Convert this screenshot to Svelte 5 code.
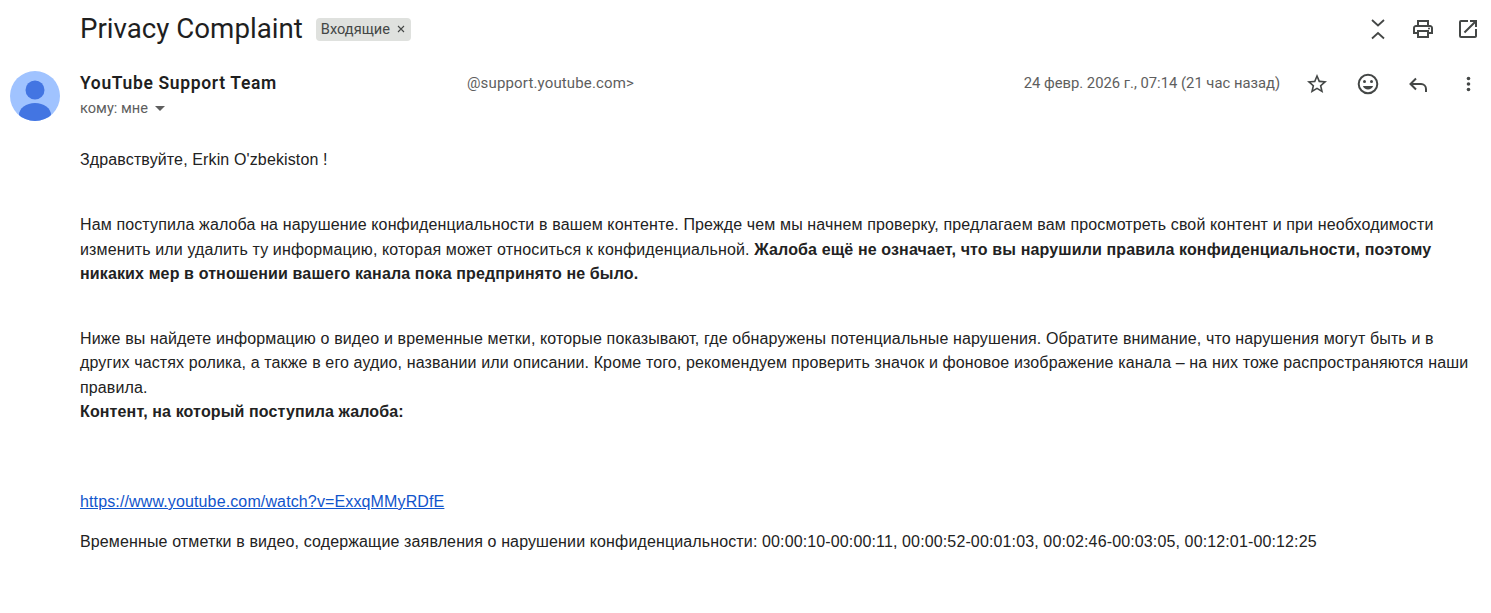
<script>
  const bodyLine = "Нам поступила жалоба на нарушение конфиденциальности в вашем контенте. Прежде чем мы начнем проверку, предлагаем вам просмотреть свой контент и при необходимости изменить или удалить ту информацию, которая может относиться к конфиденциальной.";
</script>

<div class="page">
  <header class="subject">
    <h1>Privacy Complaint</h1>
    <span class="chip">Входящие <svg class="x" viewBox="0 0 8 8" width="8" height="8"><path d="M1 1l6 6M7 1L1 7" stroke="#444746" stroke-width="1.1" fill="none"/></svg></span>
    <div class="top-actions">
      <svg viewBox="0 0 24 24" width="24" height="24" class="ic"><path d="M6 3l6 5.5L18 3M6 21.5 12 16l6 5.5" fill="none" stroke="#444746" stroke-width="1.8"/></svg>
      <svg viewBox="0 0 24 24" width="24" height="24" class="ic"><path fill="#444746" d="M19 8h-1V3H6v5H5c-1.66 0-3 1.34-3 3v6h4v4h12v-4h4v-6c0-1.66-1.34-3-3-3zM8 5h8v3H8V5zm8 14H8v-4h8v4zm2-4v-2H6v2H4v-4c0-.55.45-1 1-1h14c.55 0 1 .45 1 1v4h-2z"/><circle cx="18" cy="11.5" r="1" fill="#444746"/></svg>
      <svg viewBox="0 0 24 24" width="24" height="24" class="ic"><path fill="#444746" d="M19 19H5V5h7V3H5a2 2 0 0 0-2 2v14a2 2 0 0 0 2 2h14c1.1 0 2-.9 2-2v-7h-2v7zM14 3v2h3.59l-9.83 9.83 1.41 1.41L19 6.41V10h2V3h-7z"/></svg>
    </div>
  </header>

  <section class="meta">
    <svg class="avatar" viewBox="0 0 50 50" width="50" height="50">
      <defs><clipPath id="c"><circle cx="25" cy="25" r="25"/></clipPath></defs>
      <circle cx="25" cy="25" r="25" fill="#a0c3ff"/>
      <g clip-path="url(#c)" fill="#4375e2"><circle cx="25" cy="19" r="9.5"/><ellipse cx="25" cy="44" rx="16" ry="12"/></g>
    </svg>
    <div class="who">
      <div class="line1"><strong>YouTube Support Team</strong><span class="addr">@support.youtube.com&gt;</span></div>
      <div class="to">кому: мне <span class="caret"></span></div>
    </div>
    <span class="date">24 февр. 2026 г., 07:14 (21 час назад)</span>
    <div class="msg-actions">
      <svg viewBox="0 0 24 24" width="24" height="24"><path fill="#444746" d="m22 9.24-7.19-.62L12 2 9.19 8.63 2 9.24l5.46 4.73L5.82 21 12 17.27 18.18 21l-1.63-7.03L22 9.24zM12 15.4l-3.76 2.27 1-4.28-3.32-2.88 4.38-.38L12 6.1l1.71 4.04 4.38.38-3.32 2.88 1 4.28L12 15.4z"/></svg>
      <svg viewBox="0 0 24 24" width="24" height="24"><circle cx="13" cy="12" r="9.3" fill="none" stroke="#444746" stroke-width="2"/><circle cx="9.5" cy="9.5" r="1.5" fill="#444746"/><circle cx="16.5" cy="9.5" r="1.5" fill="#444746"/><path fill="#444746" d="M13 17.5c2.33 0 4.31-1.46 5.11-3.5H7.89c.8 2.04 2.78 3.5 5.11 3.5z"/></svg>
      <svg viewBox="0 0 24 24" width="24" height="24"><path fill="none" stroke="#444746" stroke-width="2" d="M10 6.5 4.5 12l5.5 5.5M4.5 12H15a5 5 0 0 1 5 5v3"/></svg>
      <svg viewBox="0 0 24 24" width="24" height="24"><g fill="#444746"><circle cx="12.5" cy="6.5" r="1.8"/><circle cx="12.5" cy="12" r="1.8"/><circle cx="12.5" cy="17.5" r="1.8"/></g></svg>
    </div>
  </section>

  <article class="body">
    <p class="hello">Здравствуйте, Erkin O'zbekiston !</p>
    <p class="p2">{bodyLine} <b>Жалоба ещё не означает, что вы нарушили правила конфиденциальности, поэтому никаких мер в отношении вашего канала пока предпринято не было.</b></p>
    <p class="p3">Ниже вы найдете информацию о видео и временные метки, которые показывают, где обнаружены потенциальные нарушения. Обратите внимание, что нарушения могут быть и в других частях ролика, а также в его аудио, названии или описании. Кроме того, рекомендуем проверить значок и фоновое изображение канала – на них тоже распространяются наши правила.<br><b>Контент, на который поступила жалоба:</b></p>
    <p class="link"><a href="#top">https://www.youtube.com/watch?v=ExxqMMyRDfE</a></p>
    <p class="times">Временные отметки в видео, содержащие заявления о нарушении конфиденциальности: 00:00:10-00:00:11, 00:00:52-00:01:03, 00:02:46-00:03:05, 00:12:01-00:12:25</p>
  </article>
</div>

<style>
  :global(body) { margin: 0; background: #fff; }
  .page { height: 613px; overflow: hidden; box-sizing: border-box; padding-top: 8px; color: #222; font-family: "Liberation Sans", Arial, sans-serif; }
  .subject { display: flex; align-items: center; height: 42px; padding-left: 80px; padding-right: 11px; }
  h1 { margin: 0; font: 400 27.7px/42px Roboto, sans-serif; color: #1f1f1f; }
  .chip { margin-left: 13px; background: #dfe1de; border-radius: 4px; height: 23px; padding: 0 6px 0 5px; font: 14.6px/23px Roboto, sans-serif; color: #444746; display: flex; align-items: center; gap: 7px; }
  .top-actions { margin-left: auto; display: flex; gap: 21px; }
  .meta { display: flex; align-items: flex-start; padding: 21px 11px 0 10px; height: 50px; }
  .avatar { flex: none; }
  .who { margin-left: 20px; flex: 1; }
  .line1 { display: flex; height: 24px; line-height: 24px; }
  strong { font: 600 17.5px/24px Roboto, sans-serif; letter-spacing: .65px; color: #1f1f1f; width: 387px; }
  .addr { font: 15px/24px Roboto, sans-serif; letter-spacing: .15px; color: #5e5e5e; }
  .to { font: 14.6px/24px Roboto, sans-serif; color: #5e5e5e; margin-top: 1px; display: flex; align-items: center; gap: 7px; }
  .caret { border: 5px solid transparent; border-top-color: #5e5e5e; border-bottom: 0; }
  .date { font: 14.8px/24px Roboto, sans-serif; color: #5e5e5e; margin-right: 25px; }
  .msg-actions { display: flex; gap: 26.3px; padding-top: 1px; }
  .body { padding: 0 11px 0 80px; font-size: 16px; letter-spacing: .13px; line-height: 24.5px; margin-top: 27px; }
  p { margin: 0; }
  .p2 { margin-top: 40.5px; }
  .p3 { margin-top: 40px; }
  .link { margin-top: 65.5px; }
  .times { margin-top: 15.5px; }
  a { color: #1155cc; }
</style>
